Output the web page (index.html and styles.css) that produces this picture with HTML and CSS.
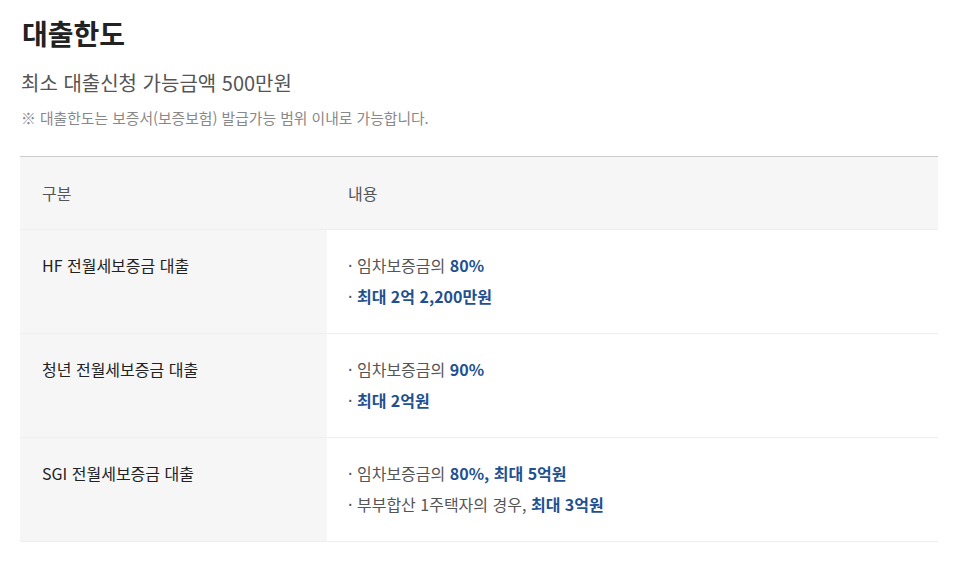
FILE: index.html
```html
<!DOCTYPE html>
<html lang="ko">
<head>
<meta charset="utf-8">
<link rel="stylesheet" href="styles.css">
</head>
<body>
<div class="wrap">
  <h2 class="title">대출한도</h2>
  <p class="sub">최소 대출신청 가능금액 500만원</p>
  <p class="note">※ 대출한도는 보증서(보증보험) 발급가능 범위 이내로 가능합니다.</p>
  <table class="tbl">
    <thead>
      <tr><th class="c1">구분</th><th class="c2">내용</th></tr>
    </thead>
    <tbody>
      <tr>
        <td class="c1">HF 전월세보증금 대출</td>
        <td class="c2">
          <p class="li">· 임차보증금의 <b>80%</b></p>
          <p class="li">· <b>최대 2억 2,200만원</b></p>
        </td>
      </tr>
      <tr>
        <td class="c1">청년 전월세보증금 대출</td>
        <td class="c2">
          <p class="li">· 임차보증금의 <b>90%</b></p>
          <p class="li">· <b>최대 2억원</b></p>
        </td>
      </tr>
      <tr>
        <td class="c1">SGI 전월세보증금 대출</td>
        <td class="c2">
          <p class="li">· 임차보증금의 <b>80%, 최대 5억원</b></p>
          <p class="li">· 부부합산 1주택자의 경우, <b>최대 3억원</b></p>
        </td>
      </tr>
    </tbody>
  </table>
</div>
</body>
</html>
```

FILE: styles.css
```css
* { box-sizing: border-box; }
body {
  margin: 0;
  background: #fff;
  font-family: "Noto Sans CJK KR", "Noto Sans", sans-serif;
  color: #222;
}
.wrap {
  padding: 14px 26px 0 20px;
}
.title {
  margin: 0 0 0 2px;
  font-size: 28px;
  font-weight: 700;
  line-height: 38px;
  color: #222;
}
.sub {
  margin: 17px 0 0 1px;
  font-size: 20px;
  line-height: 28px;
  color: #555;
}
.note {
  margin: 11px 0 0 1px;
  font-size: 14.8px;
  line-height: 20px;
  color: #888;
}
.tbl {
  margin-top: 28px;
  width: 918px;
  border-collapse: collapse;
  border-top: 1px solid #ccc;
  font-size: 16px;
}
.tbl th {
  height: 73px;
  background: #f6f6f6;
  font-weight: 400;
  text-align: left;
  color: #555;
  padding: 0 0 0 22px;
  border-bottom: 1px solid #eee;
}
.tbl th.c2 { padding-left: 21px; }
.tbl td {
  vertical-align: top;
  padding: 20px 22px 21px;
  border-bottom: 1px solid #eee;
  line-height: 31px;
}
.tbl td.c1 {
  width: 307px;
  background: #f6f6f6;
  color: #222;
}
.tbl td.c2 {
  padding-left: 21px;
  color: #555;
}
.li { margin: 0; }
.li b {
  color: #1f5190;
  font-weight: 700;
}
```
